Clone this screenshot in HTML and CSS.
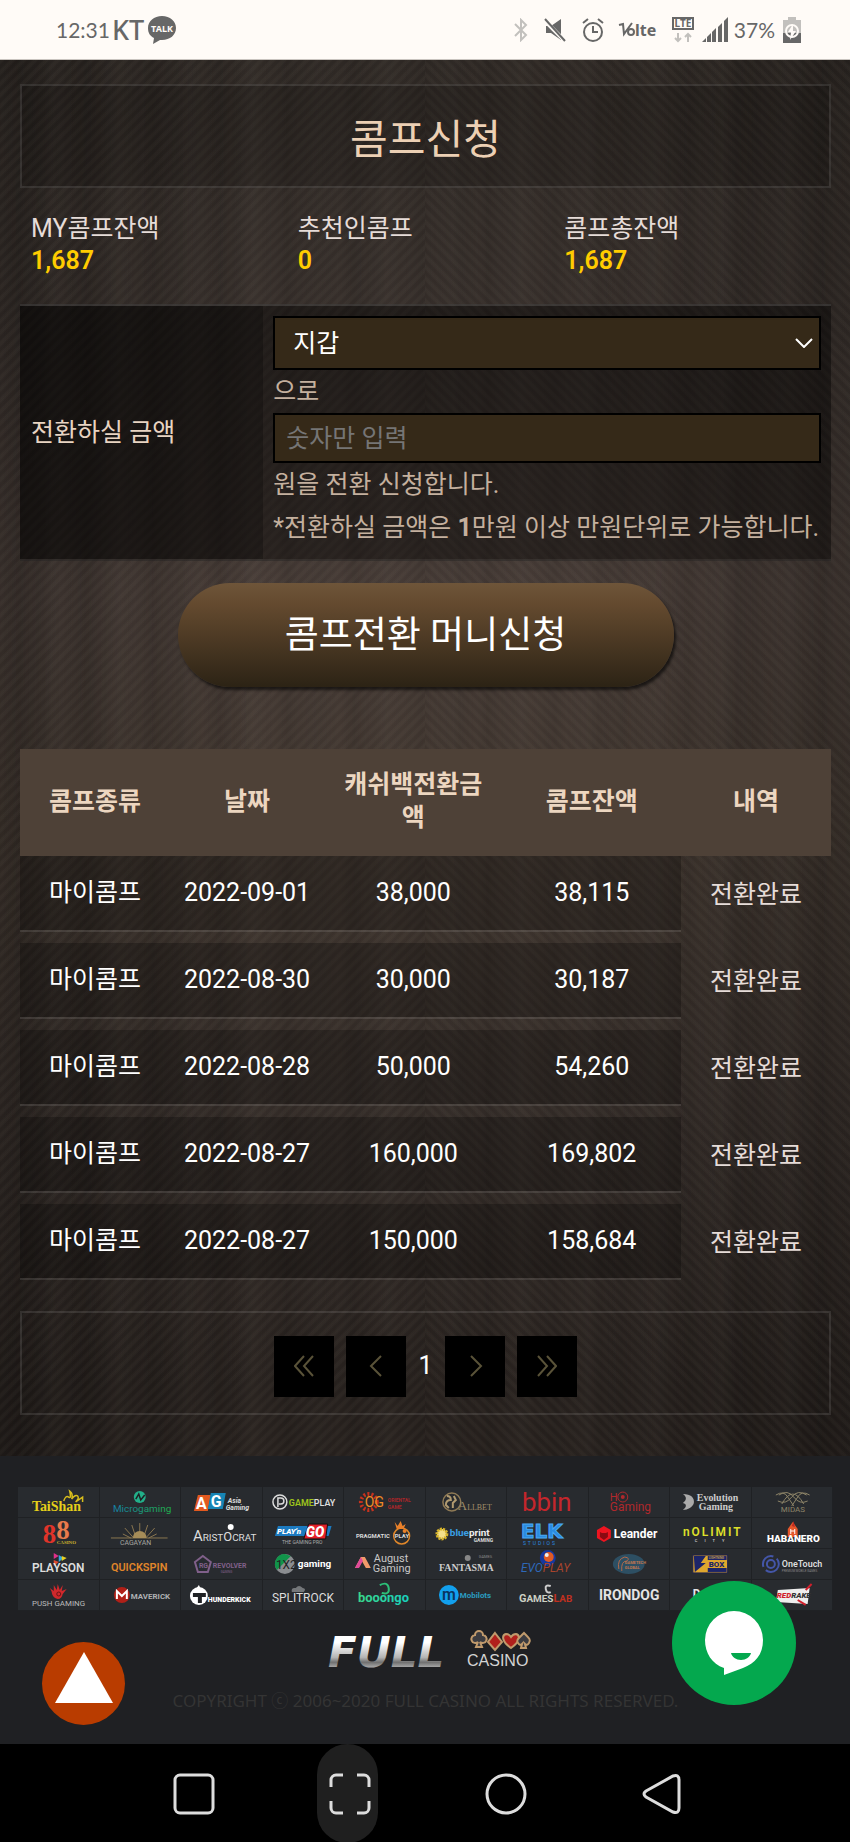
FILE: index.html
```html
<!DOCTYPE html>
<html lang="ko">
  <head>
    <meta charset="utf-8" />
    <meta name="viewport" content="width=device-width, initial-scale=1" />
    <link rel="stylesheet" href="styles.css">

    <title>콤프신청</title>
  </head>
  <body>
    <div class="status-bar">
      <div class="status-left">
        <span class="clock">12:31</span>
        <span class="carrier">KT</span>
        <svg width="30" height="28" viewBox="0 0 30 28">
          <path d="M15 0C7 0 1 5 1 12c0 5 2 8 6 10L6 28l7-4h2c8 0 14-5 14-12S23 0 15 0z" fill="#676767" />
          <text x="15" y="16" class="talk">TALK</text>
        </svg>
      </div>
      <div class="status-right">
        <svg width="14" height="24" viewBox="0 0 14 24" fill="none" stroke="#c2c0bd" stroke-width="2">
          <path d="M1 6l11 11-5 5V2l5 5L1 18" />
        </svg>
        <svg class="mute" width="22" height="24" viewBox="0 0 22 24">
          <path d="M2 8h5l10-7v21l-10-7H2z" fill="#676767" />
          <path d="M-1 1l23 23" stroke="#fffbf7" stroke-width="4" />
          <path d="M1 1l20 22" stroke="#676767" stroke-width="2" />
        </svg>
        <svg class="alarm" width="22" height="24" viewBox="0 0 22 24" fill="none" stroke="#676767" stroke-width="2">
          <circle cx="11" cy="14" r="9" />
          <path d="M11 8v6h5M1 5l5-4M21 5l-5-4" />
        </svg>
        <svg class="volte" width="40" height="24" viewBox="0 0 40 24">
          <path d="M1 7l4-1 1 10L14 5" fill="none" stroke="#676767" stroke-width="2" />
          <circle cx="13" cy="14" r="3" fill="none" stroke="#676767" stroke-width="2" />
          <text x="17" y="18" class="volte-text">lte</text>
        </svg>
        <svg class="lte" width="22" height="26" viewBox="0 0 22 26">
          <rect x="1" y="1" width="20" height="11" fill="#fffbf7" stroke="#676767" stroke-width="2" />
          <text x="11" y="10" class="lte-text">LTE</text>
          <path d="M6 16v8M3 21l3 3 3-3M16 25v-8M13 20l3-3 3 3" fill="none" stroke="#c2c0bd" stroke-width="2" />
        </svg>
        <svg class="signal" width="26" height="26" viewBox="0 0 26 26" fill="#676767">
          <path d="M0 25l4-4v4zM5 20l4-4v9H5zM10 15l4-4v14h-4zM16 10l4-4v19h-4zM22 4l4-4v25h-4z" />
        </svg>
        <span class="percent">37%</span>
        <svg width="18" height="26" viewBox="0 0 18 26">
          <path d="M0 3h5V0h8v3h5v15H0z" fill="#c2c0bd" />
          <path d="M0 16h18v10H0z" fill="#676767" />
          <circle cx="9" cy="14" r="6" fill="none" stroke="#fffbf7" stroke-width="2" />
          <path d="M10 7l-5 8h3l-1 8 6-9h-3z" fill="#fffbf7" />
        </svg>
      </div>
    </div>

    <main class="page">
      <h1 class="page-title">콤프신청</h1>

      <div class="balances">
        <div>MY콤프잔액<strong>1,687</strong></div>
        <div>추천인콤프<strong>0</strong></div>
        <div>콤프총잔액<strong>1,687</strong></div>
      </div>

      <form>
        <div class="transfer">
          <label class="transfer-label" for="amount">전환하실 금액</label>
          <div class="transfer-fields">
            <div class="select-wrap">
              <select class="field" aria-label="지갑">
                <option>지갑</option>
              </select>
              <svg class="chevron" width="18" height="10" viewBox="0 0 18 10" fill="none" stroke="#fff" stroke-width="2">
                <path d="M1 1l8 8 8-8" />
              </svg>
            </div>
            <p>으로</p>
            <input class="field" id="amount" type="text" placeholder="숫자만 입력" />
            <p>원을 전환 신청합니다.</p>
            <p class="notice">*전환하실 금액은 <b>1</b>만원 이상 만원단위로 가능합니다.</p>
          </div>
        </div>
        <button class="submit" type="submit">콤프전환 머니신청</button>
      </form>

      <table class="history">
        <colgroup>
          <col class="col-type" />
          <col class="col-date" />
          <col class="col-amount" />
          <col class="col-amount" />
          <col class="col-type" />
        </colgroup>
        <thead>
          <tr>
            <th>콤프종류</th>
            <th>날짜</th>
            <th>캐쉬백전환금액</th>
            <th>콤프잔액</th>
            <th>내역</th>
          </tr>
        </thead>
        <tbody>
          <tr><td>마이콤프</td><td>2022-09-01</td><td>38,000</td><td>38,115</td><td>전환완료</td></tr>
          <tr><td>마이콤프</td><td>2022-08-30</td><td>30,000</td><td>30,187</td><td>전환완료</td></tr>
          <tr><td>마이콤프</td><td>2022-08-28</td><td>50,000</td><td>54,260</td><td>전환완료</td></tr>
          <tr><td>마이콤프</td><td>2022-08-27</td><td>160,000</td><td>169,802</td><td>전환완료</td></tr>
          <tr><td>마이콤프</td><td>2022-08-27</td><td>150,000</td><td>158,684</td><td>전환완료</td></tr>
        </tbody>
      </table>

      <nav class="pagination">
        <button type="button" aria-label="처음">
          <svg width="20" height="22" viewBox="0 0 20 22"><path d="M10 1L1 11l9 10M19 1l-9 10 9 10" /></svg>
        </button>
        <button type="button" aria-label="이전">
          <svg width="20" height="22" viewBox="0 0 20 22"><path d="M15 1L5 11l10 10" /></svg>
        </button>
        <span>1</span>
        <button type="button" aria-label="다음">
          <svg width="20" height="22" viewBox="0 0 20 22"><path d="M6 1l10 10L6 21" /></svg>
        </button>
        <button type="button" aria-label="마지막">
          <svg width="20" height="22" viewBox="0 0 20 22"><path d="M1 1l9 10-9 10M10 1l9 10-9 10" /></svg>
        </button>
      </nav>
    </main>

    <footer class="footer">
      <ul class="partners">
        <!-- row 1 -->
        <li><svg viewBox="0 0 81 31">
          <text x="14" y="24" class="serif" font-size="14" font-weight="700" fill="#e6cf1a">TaiShan</text>
          <path d="M46 14q2-6 5-4t1-6q4 3 2 8 4-5 6-3t-2 6q4-3 7-5v5" fill="none" stroke="#d8bd1c" stroke-width="1.5" />
        </svg></li>
        <li><svg viewBox="0 0 81 31">
          <defs><linearGradient id="micro"><stop offset="0" stop-color="#1580a8" /><stop offset="1" stop-color="#20b04a" /></linearGradient></defs>
          <circle cx="40" cy="10" r="6" fill="#22b08a" />
          <path d="M36 12l3-5 2 6 4-5" fill="none" stroke="#1f2124" stroke-width="1.5" />
          <text x="13" y="25" font-size="10" fill="url(#micro)">Microgaming</text>
        </svg></li>
        <li><svg viewBox="0 0 81 31">
          <path d="M17 8h13l-3 16H13z" fill="#e2591f" /><path d="M30 6h15l-3 16H27z" fill="#1685b6" />
          <text x="15" y="22" font-size="16" font-weight="700" fill="#fff">A</text>
          <text x="30" y="20" font-size="16" font-weight="700" fill="#fff">G</text>
          <text x="47" y="16" font-size="7" font-weight="700" font-style="italic" fill="#ddd">Asia</text>
          <text x="45" y="23" font-size="7" font-weight="700" font-style="italic" fill="#ddd">Gaming</text>
        </svg></li>
        <li><svg viewBox="0 0 81 31">
          <circle cx="17" cy="15" r="7" fill="none" stroke="#ddd" stroke-width="1.5" />
          <path d="M15 20v-9h3a3 3 0 010 6h-2" fill="none" stroke="#ddd" stroke-width="1.5" />
          <text x="26" y="19" font-size="9" font-weight="600"><tspan fill="#9fc31c">GAME</tspan><tspan fill="#ddd">PLAY</tspan></text>
        </svg></li>
        <li><svg viewBox="0 0 81 31">
          <circle cx="25" cy="15" r="8" fill="none" stroke="#c8321e" stroke-width="4" stroke-dasharray="2 2" />
          <text x="21" y="20" font-size="14" fill="#f08a24">OG</text>
          <text x="44" y="15" font-size="5" font-weight="700" fill="#a8262a">ORIENTAL</text>
          <text x="44" y="22" font-size="5" font-weight="700" fill="#a8262a">GAME</text>
        </svg></li>
        <li><svg viewBox="0 0 81 31">
          <circle cx="26" cy="15" r="9" fill="none" stroke="#8f7a55" stroke-width="1.5" />
          <path d="M21 9q4 0 4 4-5 0-5 5l3 3M28 9l2 4-3 3v5" fill="none" stroke="#b09a70" stroke-width="2" />
          <text x="32" y="23" class="serif" font-size="8" fill="#a08d68"><tspan font-size="13">A</tspan>LLBET</text>
        </svg></li>
        <li><svg viewBox="0 0 81 31">
          <text x="15" y="24" font-size="26" fill="#c4262c">bbin</text>
        </svg></li>
        <li><svg viewBox="0 0 81 31">
          <text x="21" y="14" font-size="11" fill="#b0282c">H</text>
          <circle cx="34" cy="10" r="5" fill="none" stroke="#b0282c" /><circle cx="34" cy="10" r="2" fill="#b0282c" />
          <text x="21" y="24" font-size="12" fill="#b0282c">Gaming</text>
        </svg></li>
        <li><svg viewBox="0 0 81 31">
          <path d="M13 7c8 0 12 4 11 9-1 4-6 7-11 7 4-3 4-6 0-7 4-3 4-6 0-9z" fill="#aaa" />
          <text x="27" y="14" class="serif" font-size="10" font-weight="700" fill="#ccc">Evolution</text>
          <text x="29" y="23" class="serif" font-size="10" font-weight="700" fill="#ccc">Gaming</text>
        </svg></li>
        <li><svg viewBox="0 0 81 31">
          <path d="M24 8q8-5 12 2l6 9M58 8q-8-5-12 2l-6 9M26 14q8 4 14-4t15-2M56 14q-8 4-14-4T27 8M30 17q11-20 22 0" fill="none" stroke="#8d8468" />
          <text x="29" y="25" font-size="8" fill="#8d8468">MIDAS</text>
        </svg></li>
        <!-- row 2 -->
        <li><svg viewBox="0 0 81 31">
          <text x="25" y="25" class="serif" font-size="27" font-weight="700"><tspan fill="#e0342a">8</tspan><tspan dy="-4" fill="#e87a4c">8</tspan></text>
          <text x="39" y="26" class="serif" font-size="5" font-weight="700" fill="#cdb42c">CASINO</text>
        </svg></li>
        <li><svg viewBox="0 0 81 31">
          <path d="M11 20h57M40 19V5M36 19L32 7M44 19l4-12M33 19l-8-9M47 19l8-9M31 20l-8-4M49 20l8-4" stroke="#8a7650" />
          <path d="M33 20a7 7 0 0114 0z" fill="#a58c58" />
          <text x="20" y="27" font-size="7" fill="#a5a5a0">CAGAYAN</text>
        </svg></li>
        <li><svg viewBox="0 0 81 31">
          <circle cx="50" cy="9" r="3" fill="#fff" />
          <text x="12" y="23" font-size="10" fill="#ddd"><tspan font-size="15">A</tspan>RIST<tspan font-size="13">O</tspan>CRAT</text>
        </svg></li>
        <li><svg viewBox="0 0 81 31">
          <path d="M15 8h54l-3 10H12z" fill="#1c7ac0" />
          <text x="14" y="16" font-size="8" font-weight="900" font-style="italic" fill="#fff">PLAY'n</text>
          <path d="M46 6h19l-2 15H41z" fill="#e3202a" stroke="#111" />
          <text x="43" y="19" font-size="14" font-weight="900" font-style="italic" fill="#fff">GO</text>
          <text x="19" y="26" font-size="5" fill="#aaa">THE GAMING PRO</text>
        </svg></li>
        <li><svg viewBox="0 0 81 31">
          <circle cx="58" cy="18" r="8" fill="none" stroke="#e0872a" stroke-width="1.5" />
          <path d="M51 4l3 4 3-5 2 5 3-2-2 5h-7z" fill="#e8802a" /><circle cx="61" cy="13" r="2" fill="#e8802a" />
          <text x="12" y="20" font-size="6" font-weight="700" fill="#ddd">PRAGMATIC</text>
          <text x="51" y="20" font-size="6" font-weight="700" fill="#ddd">PLAY</text>
        </svg></li>
        <li><svg viewBox="0 0 81 31">
          <circle cx="16" cy="16" r="5" fill="#f4e08a" stroke="#d8b428" stroke-width="3" stroke-dasharray="2 1" />
          <text x="24" y="18" font-size="10" font-weight="700"><tspan fill="#3aa0e6">blue</tspan><tspan fill="#eee">print</tspan></text>
          <text x="48" y="24" font-size="5" font-weight="700" fill="#ddd">GAMING</text>
        </svg></li>
        <li><svg viewBox="0 0 81 31">
          <text x="14" y="20" class="wide" font-size="20" font-weight="700" fill="#2a8be0" stroke="#4aa8f4">ELK</text>
          <text x="16" y="27" class="spaced" font-size="5" fill="#2a8be0">STUDIOS</text>
        </svg></li>
        <li><svg viewBox="0 0 81 31">
          <path d="M15 8l7 4v8l-7 4-7-4v-8z" fill="#ee1420" />
          <path d="M11 14l2 1h4l2-1v5l-4 3-4-3z" fill="#8a0a12" />
          <text x="25" y="20" font-size="12" font-weight="700" fill="#fff">Leander</text>
        </svg></li>
        <li><svg viewBox="0 0 81 31">
          <text x="13" y="18" class="spaced" font-size="12" font-weight="600" fill="#dfe02a">nOLIMIT</text>
          <text x="25" y="24" class="far" font-size="4" font-weight="700" fill="#bbb">CITY</text>
        </svg></li>
        <li><svg viewBox="0 0 81 31">
          <path d="M41 4l5 7v8H36v-8z" fill="#e4572c" /><path d="M40 8l2-5 1 6z" fill="#c02820" />
          <path d="M39 11v5M43 11v5M39 13h4" stroke="#fff" />
          <text x="15" y="24" font-size="10" font-weight="900" fill="#fff">HABANERO</text>
        </svg></li>
        <!-- row 3 -->
        <li><svg viewBox="0 0 81 31">
          <path d="M36 4l5 3-5 3z" fill="#e0308a" /><path d="M41 6l5 3-5 4z" fill="#30a8e0" /><path d="M36 11l5 2-5 4z" fill="#e04a30" /><path d="M44 7l5 2-5 3z" fill="#e8d020" />
          <text x="14" y="23" font-size="12" font-weight="600" fill="#ddd">PLAYSON</text>
        </svg></li>
        <li><svg viewBox="0 0 81 31">
          <text x="11" y="22" font-size="11" font-weight="600" fill="#e0862a">QUICKSPIN</text>
        </svg></li>
        <li><svg viewBox="0 0 81 31">
          <path d="M22 7l8 6-3 10H17l-3-10z" fill="none" stroke="#80608a" stroke-width="2" />
          <text x="18" y="19" font-size="7" font-weight="700" fill="#80608a">RG</text>
          <text x="32" y="19" font-size="7" font-weight="700" fill="#80608a">REVOLVER</text>
          <text x="40" y="24" font-size="3" fill="#80608a">GAMING</text>
        </svg></li>
        <li><svg viewBox="0 0 81 31">
          <circle cx="22" cy="15" r="10" fill="#8a8d90" /><path d="M22 5a10 10 0 00-8 16L28 7z" fill="#11944a" />
          <text x="13" y="20" font-size="12" fill="#222">1X2</text>
          <text x="35" y="18" font-size="10" font-weight="700" fill="#fff">gaming</text>
        </svg></li>
        <li><svg viewBox="0 0 81 31">
          <path d="M17 8h4l6 11h-5l-4-7-3 7h-4z" fill="#f09a6a" /><path d="M17 8l2 4-4 7h-4z" fill="#e04a9a" />
          <text x="30" y="13" font-size="11" fill="#c8c8c8">August</text>
          <text x="29" y="23" font-size="11" fill="#c8c8c8">Gaming</text>
        </svg></li>
        <li><svg viewBox="0 0 81 31">
          <circle cx="42" cy="9" r="3" fill="#888" /><text x="53" y="9" font-size="4" fill="#888">GAMES</text>
          <text x="13" y="22" class="serif" font-size="10" font-weight="700" fill="#ccc">FANTASMA</text>
        </svg></li>
        <li><svg viewBox="0 0 81 31">
          <circle cx="41" cy="9" r="8" fill="#1638a0" /><circle cx="42" cy="8" r="5" fill="#e05a24" /><circle cx="40" cy="6" r="2" fill="#eee" />
          <text x="14" y="23" font-size="12" font-style="italic"><tspan fill="#2e68b8">EVO</tspan><tspan fill="#a8442c">PLAY</tspan></text>
        </svg></li>
        <li><svg viewBox="0 0 81 31">
          <ellipse cx="40" cy="15" rx="16" ry="10" fill="#2d4f63" />
          <path d="M30 20q-2-10 6-12 6 1 2 4-6 0-5 10" fill="none" stroke="#b46a4a" />
          <text x="36" y="15" font-size="4" font-weight="700" fill="#c07850">GAMETECH</text>
          <text x="36" y="20" font-size="4" font-weight="700" fill="#c07850">GLOBAL</text>
        </svg></li>
        <li><svg viewBox="0 0 81 31">
          <rect x="23" y="6" width="35" height="18" fill="#dfa72e" stroke="#1c2050" />
          <path d="M24 7h12l-5 7h5L25 23z" fill="#1c2468" />
          <rect x="38" y="7" width="19" height="4" fill="#1c2468" /><rect x="38" y="19" width="19" height="4" fill="#1c2468" />
          <text x="39" y="18" font-size="8" font-weight="900" fill="#1c2468">BOX</text>
          <text x="39" y="10" font-size="3" fill="#e8c040">LIGHTNING</text>
        </svg></li>
        <li><svg viewBox="0 0 81 31">
          <circle cx="19" cy="15" r="8" fill="none" stroke="#4456a8" stroke-width="2" stroke-dasharray="18 4" /><circle cx="19" cy="15" r="4" fill="none" stroke="#4456a8" stroke-width="2" />
          <text x="30" y="18" font-size="9" font-weight="600" fill="#ddd">OneTouch</text>
          <text x="30" y="23" font-size="3" fill="#888">PREMIUM MOBILE GAMES</text>
        </svg></li>
        <!-- row 4 -->
        <li><svg viewBox="0 0 81 31">
          <path d="M34 12l-2-4 4 3V5l3 5 1-6 2 6 3-5-1 6 5-2-4 5q-1 5-5 5-5-1-6-6z" fill="#d0282c" /><circle cx="41" cy="14" r="2" fill="none" stroke="#6a1416" />
          <text x="14" y="26" font-size="8" fill="#bbb">PUSH GAMING</text>
        </svg></li>
        <li><svg viewBox="0 0 81 31">
          <circle cx="22" cy="15" r="8" fill="#b02018" /><path d="M17 19v-8l5 5 5-5v8" fill="none" stroke="#fff" stroke-width="2" />
          <text x="31" y="19" font-size="8" font-weight="700" fill="#aeb0b2">MAVERICK</text>
        </svg></li>
        <li><svg viewBox="0 0 81 31">
          <circle cx="18" cy="16" r="9" fill="#fff" /><path d="M15 9l3-4 2 4z" fill="#fff" /><path d="M12 13h13v4h-4v6h-4v-6h-5z" fill="#1f2124" />
          <text x="27" y="22" font-size="7" font-weight="900" fill="#fff">HUNDERKICK</text>
        </svg></li>
        <li><svg viewBox="0 0 81 31">
          <path d="M29 12q-1-5 4-4 3-4 7 0 4 1 1 4z" fill="#74777a" />
          <text x="9" y="22" font-size="12" fill="#ddd">SPLITROCK</text>
        </svg></li>
        <li><svg viewBox="0 0 81 31">
          <defs><linearGradient id="boo"><stop offset="0" stop-color="#3ad88a" /><stop offset="1" stop-color="#18d0c0" /></linearGradient></defs>
          <path d="M36 5q8-4 9 3t-7 5" fill="none" stroke="#2cc078" stroke-width="2" />
          <text x="14" y="22" font-size="13" font-weight="700" fill="url(#boo)">booongo</text>
        </svg></li>
        <li><svg viewBox="0 0 81 31">
          <circle cx="23" cy="15" r="10" fill="#12a0ee" /><text x="16" y="20" font-size="16" font-weight="600" fill="#0a3460">m</text>
          <text x="34" y="18" font-size="8" font-weight="700" fill="#2a9cc0">Mobilots</text>
        </svg></li>
        <li><svg viewBox="0 0 81 31">
          <path d="M44 6q-6-2-5 3t5 3" fill="none" stroke="#ccc" stroke-width="2" />
          <text x="12" y="22" font-size="11" font-weight="700"><tspan fill="#ccd0c4">G</tspan><tspan font-size="10" fill="#ccd0c4">AMES</tspan><tspan fill="#c03020">L</tspan><tspan font-size="10" fill="#c03020">AB</tspan></text>
        </svg></li>
        <li><svg viewBox="0 0 81 31">
          <text x="10" y="20" font-size="14" font-weight="700" fill="#e4e4e4">IRONDOG</text>
        </svg></li>
        <li><svg viewBox="0 0 81 31">
          <text x="23" y="18" font-size="12" font-weight="700" fill="#e4e4e4">D</text>
        </svg></li>
        <li><svg viewBox="0 0 81 31">
          <path d="M26 10l32-2-2 16-32-2z" fill="#eee" /><path d="M54 10l6-6M46 20l8 5" stroke="#d0202c" stroke-width="2" />
          <text x="25" y="18" font-size="8" font-weight="900" font-style="italic"><tspan fill="#d0202c">RED</tspan><tspan fill="#333">RAKE</tspan></text>
        </svg></li>
      </ul>

      <svg class="brand" width="212" height="42" viewBox="0 0 212 42">
        <defs>
          <linearGradient id="steel" x1="0" y1="0" x2="0" y2="1">
            <stop offset="0.3" stop-color="#fff" /><stop offset="0.6" stop-color="#b4b4b4" /><stop offset="0.7" stop-color="#707070" /><stop offset="0.9" stop-color="#ddd" />
          </linearGradient>
        </defs>
        <text x="8" y="38" class="full">FULL</text>
        <g stroke="#c09a6c" stroke-width="2">
          <path d="M155 6a4 4 0 018 0 4 4 0 11-3 7l2 5h-6l2-5a4 4 0 11-3-7z" fill="#3c3c40" />
          <path d="M175 4l7 9-7 8-7-8z" fill="#b0201c" />
          <path d="M191 19c-10-7-9-13-5-14q3 0 5 3 2-3 5-3c4 1 5 7-5 14z" fill="#b0201c" />
          <path d="M204 4c6 6 7 7 5 10q-2 3-4 1l1 4h-5l1-4q-2 2-4-1c-2-3 0-4 6-10z" fill="#3c3c40" />
        </g>
        <text x="147" y="37" class="casino">CASINO</text>
      </svg>

      <p class="copyright">COPYRIGHT ⓒ 2006~2020 FULL CASINO ALL RIGHTS RESERVED.</p>

      <a class="to-top" href="#" aria-label="위로">
        <svg width="58" height="52" viewBox="0 0 58 52"><path d="M29 0l29 51H0z" fill="#fff" /></svg>
      </a>
      <button class="chat" type="button" aria-label="채팅">
        <svg width="60" height="64" viewBox="0 0 60 64">
          <path d="M30 0a29 29 0 0129 29c0 15-8 23-20 28L20 64v-7C8 53 1 42 1 29A29 29 0 0130 0z" fill="#fff" />
          <path d="M27 42h20c-1 4-5 7-10 7s-9-3-10-7z" fill="#04a84e" />
        </svg>
      </button>
    </footer>

    <nav class="system-nav">
      <button type="button" aria-label="최근 앱">
        <svg width="42" height="42" viewBox="0 0 42 42"><rect x="2" y="2" width="38" height="38" rx="5" /></svg>
      </button>
      <button type="button" aria-label="화면 캡처">
        <span class="pill">
          <svg width="42" height="42" viewBox="0 0 42 42"><path d="M14 2H7a5 5 0 00-5 5v7M28 2h7a5 5 0 015 5v7M14 40H7a5 5 0 01-5-5v-7M28 40h7a5 5 0 005-5v-7" /></svg>
        </span>
      </button>
      <button type="button" aria-label="홈">
        <svg width="42" height="42" viewBox="0 0 42 42"><circle cx="21" cy="21" r="19" /></svg>
      </button>
      <button type="button" aria-label="뒤로">
        <svg width="42" height="42" viewBox="0 0 42 42"><path d="M5 18L32 3q6-2 6 4v28q0 6-6 4L5 24q-4-3 0-6z" /></svg>
      </button>
    </nav>
  </body>
</html>
```
FILE: styles.css
```css
* {
  box-sizing: border-box;
}

body {
  margin: 0;
  background-color: #000;
  color: #e6dcd8;
  font-family: Roboto, "Noto Sans CJK KR", sans-serif;
  font-size: 25px;
  line-height: 32px;
}

svg {
  display: block;
  flex-shrink: 0;
}

button {
  border: none;
  padding: 0;
  font-family: inherit;
  cursor: pointer;
}

/* status bar */
.status-bar {
  display: flex;
  justify-content: space-between;
  align-items: center;
  height: 60px;
  padding: 0 49px 0 56px;
  border-bottom: 1px solid #c9c4bf;
  background-color: #fffbf7;
  color: #676767;
  font-family: "Noto Sans", sans-serif;
}
.status-left,
.status-right {
  display: flex;
  align-items: center;
}
.clock {
  font-family: Lato, sans-serif;
  font-size: 21px;
  margin-right: 2px;
}
.carrier {
  font-size: 27px;
  font-weight: 500;
  margin-right: 3px;
}
.talk {
  fill: #fffbf7;
  font-size: 9px;
  font-weight: 700;
  text-anchor: middle;
}
.mute,
.alarm {
  margin-left: 16px;
}
.volte,
.lte {
  margin-left: 14px;
}
.volte-text {
  fill: #676767;
  font-size: 16px;
  font-weight: 700;
}
.lte-text {
  fill: #676767;
  font-size: 10px;
  font-weight: 700;
  text-anchor: middle;
}
.signal {
  margin-left: 8px;
}
.percent {
  margin: 0 8px 0 6px;
  font-family: Lato, sans-serif;
  font-size: 21px;
}

/* dark wood background, grain mirrored around the middle */
.page {
  padding: 24px 19px 41px 20px;
  background-color: #2c2522;
  background-image:
    repeating-linear-gradient(135deg, rgba(255, 240, 210, 0.03) 0 2px, transparent 4px 6px, rgba(255, 240, 210, 0.03) 8px),
    repeating-linear-gradient(45deg, rgba(255, 240, 210, 0.03) 0 2px, transparent 4px 6px, rgba(255, 240, 210, 0.03) 8px),
    repeating-linear-gradient(90deg, transparent 0, rgba(0, 0, 0, 0.08) 19px, transparent 31px, rgba(255, 240, 220, 0.02) 52px, transparent 67px),
    repeating-linear-gradient(90deg, transparent 0, rgba(0, 0, 0, 0.1) 43px, transparent 61px, rgba(0, 0, 0, 0.06) 97px, transparent 139px),
    linear-gradient(90deg, rgba(0, 0, 0, 0.25), transparent 30%, transparent 70%, rgba(0, 0, 0, 0.25)),
    linear-gradient(#2f2925, #38302c 20%, #463b36 38%, #40362f 55%, #352d29 75%, #27211e 95%);
  background-position: left, right, left, left, left, left;
  background-size: 50% 100%, 50% 100%, 100% 100%, 100% 100%, 100% 100%, 100% 100%;
  background-repeat: no-repeat;
}

.page-title {
  margin: 0;
  border: 2px solid rgba(255, 255, 255, 0.1);
  padding: 30px 0 22px;
  background-color: rgba(0, 0, 0, 0.15);
  color: #ecd0b4;
  font-size: 41px;
  font-weight: 400;
  line-height: 48px;
  text-align: center;
}

.balances {
  display: grid;
  grid-template-columns: repeat(3, 1fr);
  padding: 25px 0 27px 11px;
}
.balances strong {
  display: block;
  color: #fc0;
  font-weight: 600;
}

/* transfer form */
.transfer {
  display: flex;
  border-top: 2px solid rgba(255, 255, 255, 0.12);
  border-bottom: 2px solid rgba(255, 255, 255, 0.06);
  background-color: rgba(0, 0, 0, 0.4);
}
.transfer-label {
  display: flex;
  align-items: center;
  width: 30%;
  padding-left: 11px;
  background-color: rgba(0, 0, 0, 0.25);
  color: #e8d4c2;
}
.transfer-fields {
  flex: 1;
  padding: 10px;
  color: #c4b09e;
}
.transfer-fields p {
  margin: 0;
  line-height: 43px;
}
.transfer-fields .notice {
  white-space: nowrap;
}
.select-wrap {
  position: relative;
}
.field {
  display: block;
  width: 100%;
  height: 50px;
  border: 2px solid #000;
  border-radius: 0;
  padding: 0 11px;
  background-color: #352918;
  color: #fff;
  font-family: inherit;
  font-size: 25px;
  appearance: none;
}
.field::placeholder {
  color: #757575;
}
select.field {
  height: 54px;
  padding: 0 18px;
}
.chevron {
  position: absolute;
  top: 22px;
  right: 8px;
  pointer-events: none;
}

.submit {
  display: block;
  width: 496px;
  max-width: 100%;
  height: 104px;
  margin: 22px auto 62px;
  padding-bottom: 6px;
  border-radius: 52px;
  background: linear-gradient(#6e5539, #644a2f 20%, #2c2315);
  box-shadow: 2px 3px 3px rgba(0, 0, 0, 0.6);
  color: #fff;
  font-size: 37px;
}

/* history */
.history {
  width: 100%;
  margin-bottom: 31px;
  border-collapse: separate;
  border-spacing: 0;
  table-layout: fixed;
  text-align: center;
}
.col-type {
  width: 18.5%;
}
.col-date {
  width: 19%;
}
.col-amount {
  width: 22%;
}
.history th {
  padding: 19px 14px 22px;
  background-color: #4e4137;
  color: #ecd6c0;
  line-height: 33px;
}
.history td {
  height: 87px;
  border-top: 11px solid transparent;
  border-bottom: 2px solid rgba(255, 255, 255, 0.1);
  padding: 0;
  background-color: rgba(0, 0, 0, 0.25);
  background-clip: padding-box;
  color: #fff;
}
.history tr:first-child td {
  height: 76px;
  border-top: none;
}
.history td:last-child {
  border-bottom: none;
  padding-top: 2px;
  background-color: transparent;
  color: #e6dcd8;
}

/* pagination */
.pagination {
  display: flex;
  justify-content: center;
  align-items: center;
  gap: 12px;
  height: 104px;
  border: 2px solid rgba(255, 255, 255, 0.1);
  padding-top: 6px;
  color: #fff;
}
.pagination button {
  display: flex;
  justify-content: center;
  align-items: center;
  width: 60px;
  height: 61px;
  background-color: #000;
}
.pagination path {
  fill: none;
  stroke: #595238;
  stroke-width: 2;
}

/* footer */
.footer {
  position: relative;
  padding: 31px 17px 24px 18px;
  background-color: #1f2023;
}
.partners {
  display: grid;
  grid-template-columns: repeat(10, 1fr);
  margin: 0;
  padding: 0;
  list-style: none;
}
.partners li {
  height: 31px;
  border-right: 1px solid #1f2124;
  border-bottom: 1px solid #1f2124;
  background-color: #282b2f;
}
.partners svg {
  width: 100%;
  height: 31px;
}
.partners .serif {
  font-family: "Liberation Serif", serif;
}
.partners .wide {
  font-family: "DejaVu Sans", sans-serif;
}
.partners .spaced {
  letter-spacing: 2px;
}
.partners .far {
  letter-spacing: 7px;
}
.brand {
  margin: 18px auto 14px;
}
.full {
  fill: url(#steel);
  font-family: "DejaVu Sans", sans-serif;
  font-size: 42px;
  font-style: italic;
  font-weight: 700;
}
.casino {
  fill: #d4d4d4;
  font-family: "Liberation Sans", sans-serif;
  font-size: 16px;
}
.copyright {
  margin: 0;
  padding-bottom: 3px;
  color: #343434;
  font-family: "Noto Sans", "Noto Sans CJK KR", sans-serif;
  font-size: 17px;
  text-align: center;
}
.to-top {
  position: absolute;
  bottom: 19px;
  left: 42px;
  display: flex;
  justify-content: center;
  width: 83px;
  height: 83px;
  padding-top: 10px;
  border-radius: 50%;
  background-color: #b93c00;
}
.chat {
  position: absolute;
  right: 54px;
  bottom: 39px;
  display: flex;
  justify-content: center;
  align-items: center;
  width: 124px;
  height: 124px;
  border-radius: 50%;
  background-color: #04a84e;
}

/* system navigation */
.system-nav {
  display: flex;
  justify-content: center;
  height: 99px;
  padding-left: 6px;
  background-color: #000;
}
.system-nav button {
  display: flex;
  justify-content: center;
  align-items: center;
  width: 156px;
  background: none;
}
.system-nav svg {
  fill: none;
  stroke: #ddd;
  stroke-width: 3;
}
.pill {
  display: flex;
  justify-content: center;
  align-items: center;
  width: 61px;
  height: 99px;
  margin-right: 6px;
  padding-left: 6px;
  border-radius: 31px;
  background-color: #1f1f1f;
}
```
